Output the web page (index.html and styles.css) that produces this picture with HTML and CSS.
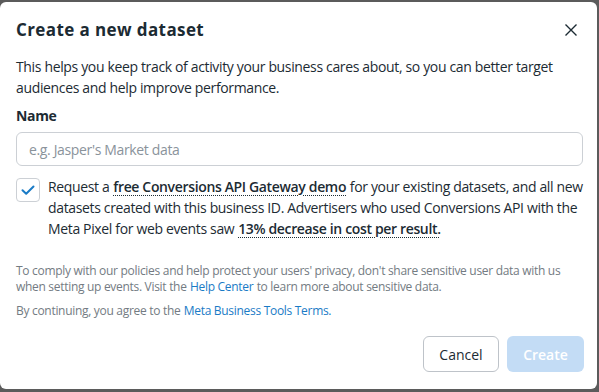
FILE: index.html
```html
<!DOCTYPE html>
<html lang="en">
  <head>
    <title>Create a new dataset</title>
    <link rel="stylesheet" href="styles.css">
  </head>
  <body>
    <div class="dialog">
      <div class="header">
        <h2>Create a new dataset</h2>
        <button class="close" aria-label="Close">
          <svg width="12" height="12" viewBox="0 0 12 12">
            <path d="M0.5 0.5 L11.5 11.5 M11.5 0.5 L0.5 11.5" stroke="#1c2b33" stroke-width="1.4" fill="none" />
          </svg>
        </button>
      </div>
      <div class="content">
        <p class="intro">This helps you keep track of activity your business cares about, so you can better target audiences and help improve performance.</p>
        <label class="field-label" for="name">Name</label>
        <input id="name" class="text-input" type="text" placeholder="e.g. Jasper's Market data" />
        <div class="check-row">
          <span class="checkbox">
            <svg width="16" height="16" viewBox="0 0 16 16">
              <path d="M2.5 8.2 L6.2 11.8 L13.5 4.5" stroke="#1a7bc6" stroke-width="2" fill="none" stroke-linecap="round" stroke-linejoin="round" />
            </svg>
          </span>
          <p class="check-text">Request a <b class="dotted">free Conversions API Gateway demo</b> for your existing datasets, and all new datasets created with this business ID. Advertisers who used Conversions API with the Meta Pixel for web events saw <b class="dotted">13% decrease in cost per result.</b></p>
        </div>
        <p class="note">To comply with our policies and help protect your users' privacy, don't share sensitive user data with us when setting up events. Visit the <a href="#">Help Center</a> to learn more about sensitive data.</p>
        <p class="note terms">By continuing, you agree to the <a href="#">Meta Business Tools Terms.</a></p>
      </div>
      <div class="footer">
        <button class="btn btn-cancel">Cancel</button>
        <button class="btn btn-create" disabled>Create</button>
      </div>
    </div>
  </body>
</html>
```

FILE: styles.css
```css
* {
  box-sizing: border-box;
  margin: 0;
  padding: 0;
}
body {
  background-color: #5b5b5b;
  font-family: "Open Sans", "Noto Sans", Arial, sans-serif;
  color: #1c2b33;
  letter-spacing: -0.35px;
  overflow: hidden;
}
.dialog {
  width: 597px;
  height: 387px;
  margin-top: 2px;
  background: #fff;
  border-radius: 6px;
  display: flex;
  flex-direction: column;
}
.header {
  display: flex;
  align-items: center;
  justify-content: space-between;
  padding: 16px 20px 0 16px;
  height: 40px;
}
.header h2 {
  font-size: 17px;
  font-weight: 700;
  line-height: 24px;
  letter-spacing: 0.4px;
}
.close {
  border: none;
  background: none;
  width: 12px;
  height: 12px;
  display: flex;
}
.content {
  padding: 14px 14px 0 16px;
}
.intro {
  font-size: 14px;
  line-height: 21px;
}
.field-label {
  display: block;
  margin-top: 8px;
  font-size: 14px;
  font-weight: 700;
  line-height: 20px;
}
.text-input {
  display: block;
  width: 567px;
  height: 34px;
  margin-top: 6px;
  padding: 0 12px;
  border: 1px solid #ccd0d5;
  border-radius: 6px;
  font-family: inherit;
  font-size: 14px;
  letter-spacing: -0.35px;
  color: #1c2b33;
}
.text-input::placeholder {
  color: #8a939b;
}
.check-row {
  display: flex;
  gap: 8px;
  margin-top: 10px;
}
.checkbox {
  flex: none;
  width: 24px;
  height: 24px;
  margin-top: 2px;
  border: 1px solid #ccd0d5;
  border-radius: 4px;
  display: flex;
  align-items: center;
  justify-content: center;
}
.check-text {
  font-size: 14px;
  line-height: 21px;
}
.dotted {
  font-weight: 600;
  margin: 0 0.5px;
  text-decoration: underline dotted #1c2b33;
  text-decoration-thickness: 1px;
  text-underline-offset: 3px;
}
.note {
  margin-top: 24px;
  font-size: 12px;
  line-height: 16px;
  letter-spacing: -0.3px;
  color: #737b82;
}
.note a {
  margin: 0 0.5px;
  color: #1a7bc6;
  text-decoration: none;
}
.note.terms {
  margin-top: 8px;
}
.footer {
  display: flex;
  justify-content: flex-end;
  gap: 8px;
  padding: 17px 13px 0 0;
}
.btn {
  height: 36px;
  border-radius: 6px;
  font-family: inherit;
  font-size: 14px;
  font-weight: 600;
  letter-spacing: 0;
  padding: 0;
}
.btn-cancel {
  width: 76px;
  background: #fff;
  border: 1px solid #bec3c9;
  color: #1c2b33;
  font-weight: 400;
}
.btn-create {
  width: 77px;
  background: #c3dcf5;
  border: none;
  color: #fff;
}
```
